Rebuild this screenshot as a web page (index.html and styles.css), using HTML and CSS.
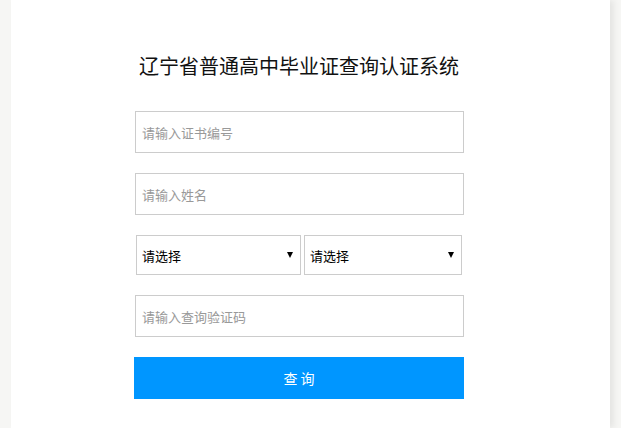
FILE: index.html
```html
<!DOCTYPE html>
<html lang="zh-CN">
<head>
<meta charset="utf-8">
<title>辽宁省普通高中毕业证查询认证系统</title>
<link rel="stylesheet" href="styles.css">
</head>
<body>
<div class="page">
  <form class="form">
    <h1 class="title">辽宁省普通高中毕业证查询认证系统</h1>
    <input class="field" type="text" placeholder="请输入证书编号">
    <input class="field" type="text" placeholder="请输入姓名">
    <div class="select-row">
      <div class="select-wrap first">
        <select class="select"><option>请选择</option></select>
      </div>
      <div class="select-wrap second">
        <select class="select"><option>请选择</option></select>
      </div>
    </div>
    <input class="field" type="text" placeholder="请输入查询验证码">
    <button class="submit" type="button">查 询</button>
  </form>
</div>
</body>
</html>
```
FILE: styles.css
```css
html, body {
  margin: 0;
  padding: 0;
  background: #f6f6f4;
  height: 100%;
}
body {
  font-family: "Microsoft YaHei", "Noto Sans CJK SC", "Noto Sans", sans-serif;
  overflow: hidden;
}
.page {
  width: 599px;
  margin: 0 11px;
  min-height: 100vh;
  background: #ffffff;
  box-shadow: 4px 0 6px rgba(0, 0, 0, 0.07);
}
.form {
  width: 330px;
  margin: 0 0 0 123px;
  padding-top: 51px;
  display: flex;
  flex-direction: column;
  align-items: flex-start;
  gap: 20px;
}
.title {
  width: 330px;
  margin: 0 0 10px 0;
  font-size: 20px;
  font-weight: normal;
  line-height: 30px;
  color: #111;
  text-align: center;
}
.field {
  box-sizing: border-box;
  width: 329px;
  height: 42px;
  margin: 0 0 0 1px;
  padding: 0 6px;
  border: 1px solid #cccccc;
  outline: none;
  font-family: inherit;
  font-size: 13px;
  color: #333;
  background: #fff;
}
.field::placeholder {
  color: #999;
}
.select-row {
  display: flex;
  gap: 3px;
  margin-left: 2px;
}
.select-wrap {
  position: relative;
  height: 40px;
}
.select-wrap.first { width: 165px; }
.select-wrap.second { width: 158px; }
.select-wrap::after {
  content: "";
  position: absolute;
  right: 8px;
  top: 17px;
  width: 0;
  height: 0;
  border-left: 3px solid transparent;
  border-right: 3px solid transparent;
  border-top: 6px solid #000;
  pointer-events: none;
}
.select {
  -webkit-appearance: none;
  appearance: none;
  box-sizing: border-box;
  width: 100%;
  height: 40px;
  margin: 0;
  padding: 0 5px;
  border: 1px solid #cccccc;
  border-radius: 0;
  background: #fff;
  font-family: inherit;
  font-size: 13px;
  color: #000;
  outline: none;
}
.submit {
  box-sizing: border-box;
  width: 330px;
  height: 42px;
  margin: 0;
  border: none;
  background: #0096ff;
  color: #fff;
  font-family: inherit;
  font-size: 14px;
  cursor: pointer;
}
```
